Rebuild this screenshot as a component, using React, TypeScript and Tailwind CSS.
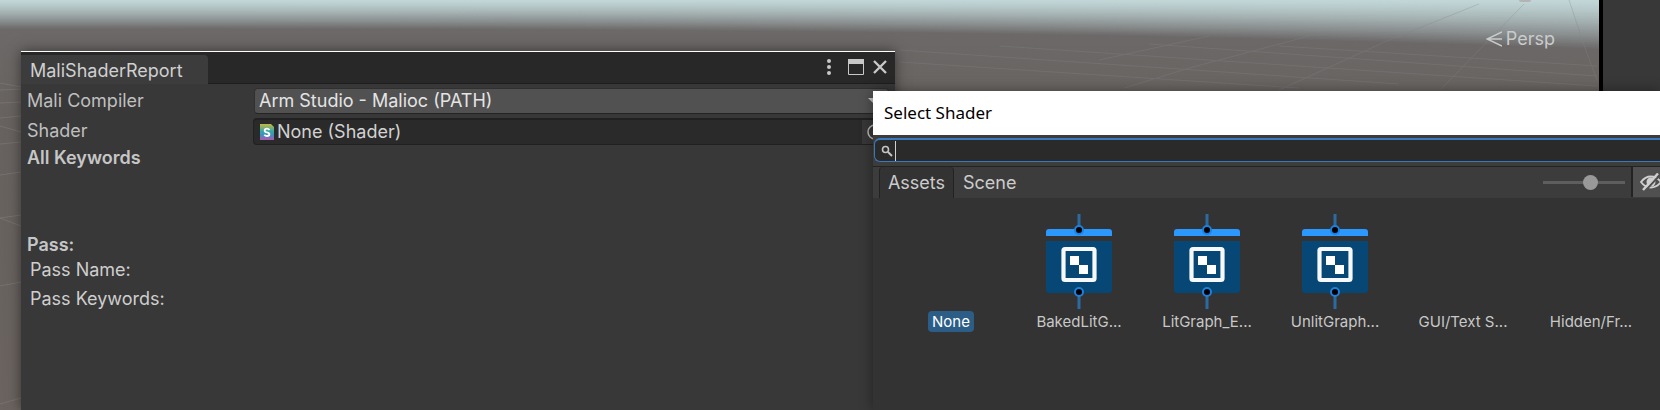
import React from "react";

const horizon = (x: number) => 29 + 20 * Math.pow(x / 1600, 3);

const mix = (a: number[], b: number[], t: number) =>
  `rgb(${a.map((v, i) => Math.round(v + (b[i] - v) * t)).join(",")})`;

const BANDS = 30;
const XS = Array.from({ length: 17 }, (_, i) => i * 100);

function Scene() {
  const bands = [];
  for (let i = BANDS; i >= 1; i--) {
    const t = i / BANDS;
    const pts = XS.map((x) => `${x},${(horizon(x) * t).toFixed(1)}`).join(" ");
    bands.push(
      <polygon key={i} points={`1600,0 0,0 ${pts}`} fill={mix([194, 215, 216], [110, 107, 107], Math.pow(t, 1.3))} />,
    );
  }
  return (
    <svg className="h-full w-full" viewBox="0 0 1600 410" preserveAspectRatio="none" aria-hidden="true">
      <defs>
        <linearGradient id="ground" x1="0" y1="0" x2="0" y2="1">
          <stop offset="0" stopColor="#6e6b6b" />
          <stop offset="0.3" stopColor="#67625f" />
          <stop offset="1" stopColor="#6a635f" />
        </linearGradient>
      </defs>
      <rect width="1600" height="410" fill="url(#ground)" />
      {bands}
      <g stroke="#8b8886" strokeWidth="1" opacity="0.4" fill="none">
        <path d="M0 83l21 4M0 90l21-1M0 103l21-1M0 118l21-2M0 126l21 6M0 144l21-2M0 175l21-3M0 218l21-3M0 218l21 8M0 286l21-4M0 404l21-6" />
      </g>
      <g stroke="#85878a" strokeWidth="1" opacity="0.3" fill="none">
        <path d="M1280 90L1390 40L1480 4M1442 89L1482 48L1525 4M1570 0L1586 48L1598 80M1125 88L1190 68L1310 36M1100 60L1210 36" />
        <path d="M900 62L1300 88M900 50L1400 84M1000 46L1598 86M1150 44L1598 76M1280 46L1598 66" />
      </g>
    </svg>
  );
}

function ShaderGraphIcon() {
  return (
    <svg className="h-24 w-17" viewBox="0 0 68 96" aria-hidden="true">
      <path d="M34 0v13M34 81v14" stroke="#2c6aa3" strokeWidth="3" />
      <path d="M1 22v-4q0-3 3-3h60q3 0 3 3v4z" fill="#2b98fd" />
      <path d="M1 27h66v49q0 3-3 3H4q-3 0-3-3z" fill="#064775" />
      <rect x="18.500" y="35" width="31" height="31" rx="1.500" fill="none" stroke="#f6f8fc" strokeWidth="4.200" />
      <path d="M25 42h9v9h9v9h-9v-9h-9z" fill="#fff" />
      <circle cx="34" cy="16" r="4" fill="#000" stroke="#1f7fdc" strokeWidth="2" />
      <circle cx="34" cy="78" r="4" fill="#000" stroke="#1f7fdc" strokeWidth="2" />
    </svg>
  );
}

const items = [
  { name: "None", selected: true },
  { name: "BakedLitG...", graph: true },
  { name: "LitGraph_E...", graph: true },
  { name: "UnlitGraph...", graph: true },
  { name: "GUI/Text S..." },
  { name: "Hidden/Fr..." },
];

function ReportWindow() {
  return (
    <section className="absolute top-[51px] bottom-0 left-[21px] flex w-[874px] flex-col border-t border-white bg-[#383838] shadow-[0_0_12px_rgba(0,0,0,0.5)]">
      <header className="flex h-8 items-end justify-between border-b border-[#1e1e1e] bg-[#282828]">
        <h1 className="-mb-px flex h-[29px] w-[187px] items-center rounded-tr bg-[#3c3c3c] pl-[9px] pt-0.5 text-[#d0d0d0]">
          MaliShaderReport
        </h1>
        <div className="flex h-full items-center gap-2 pr-[7px] pb-0.5 text-[#c8c8c8]">
          <button aria-label="Window menu">
            <svg className="h-4 w-4" viewBox="0 0 16 16" fill="currentColor">
              <circle cx="5" cy="2" r="2" />
              <circle cx="5" cy="8" r="2" />
              <circle cx="5" cy="14" r="2" />
            </svg>
          </button>
          <button aria-label="Maximize">
            <svg className="h-4 w-4" viewBox="0 0 16 16">
              <path d="M.5.5h15v15H.5z" fill="none" stroke="currentColor" />
              <path d="M0 0h16v5H0z" fill="currentColor" />
            </svg>
          </button>
          <button aria-label="Close">
            <svg className="h-4 w-4" viewBox="0 0 16 16" stroke="currentColor" strokeWidth="2.4">
              <path d="M2 2l12 12M14 2L2 14" />
            </svg>
          </button>
        </div>
      </header>
      <form className="flex flex-col pt-[3px] pl-1.5">
        <div className="flex h-7 items-center">
          <label htmlFor="compiler" className="w-[227px] text-[#bfbfbf]">Mali Compiler</label>
          <div className="mr-1.5 flex h-[26px] flex-1 items-center rounded border border-[#303030] border-b-[#242424] bg-[#515151] text-[#e4e4e4]">
            <select id="compiler" className="h-full flex-1 appearance-none bg-transparent pl-1 outline-none">
              <option>Arm Studio - Malioc (PATH)</option>
            </select>
            <svg className="mr-2 h-2 w-3" viewBox="0 0 12 8" aria-hidden="true">
              <path d="M0 1h12L6 7z" fill="#c4c4c4" />
            </svg>
          </div>
        </div>
        <div className="mt-0.5 flex h-7 items-center">
          <label htmlFor="shader" className="w-[226px] text-[#bfbfbf]">Shader</label>
          <div className="mr-1.5 flex h-[27px] flex-1 items-center rounded border border-t-2 border-[#212121] bg-[#2a2a2a] pl-1.5 text-[#d2d2d2]">
            <svg className="h-4 w-3.5" viewBox="0 0 14 16" aria-hidden="true">
              <defs>
                <linearGradient id="shaderFile" x1="0" y1="0" x2="0" y2="1">
                  <stop offset="0" stopColor="#c7b843" />
                  <stop offset="0.45" stopColor="#35a9a5" />
                  <stop offset="0.7" stopColor="#3f8fc0" />
                  <stop offset="1" stopColor="#b455a8" />
                </linearGradient>
              </defs>
              <path d="M0 0h11l3 3v13H0z" fill="url(#shaderFile)" />
              <path d="M9.5 6Q8.500 4.700 7 4.700q-2.300 0-2.300 1.700Q4.700 8 7 8.300q2.400.4 2.400 2 0 1.700-2.400 1.700-1.700 0-2.700-1.300" fill="none" stroke="#fff" strokeWidth="1.8" />
            </svg>
            <input id="shader" readOnly value="None (Shader)" className="min-w-0 flex-1 bg-transparent pl-[3px] outline-none" />
            <button type="button" aria-label="Pick shader" className="flex h-full w-[26px] items-center justify-center bg-[#373737]">
              <svg className="h-4 w-4" viewBox="0 0 16 16" fill="none" stroke="#b4b4b4" strokeWidth="1.5">
                <circle cx="8" cy="8" r="7" />
                <circle cx="8" cy="8" r="1.5" fill="#b4b4b4" />
              </svg>
            </button>
          </div>
        </div>
      </form>
      <h2 className="mt-px pl-1.5 font-semibold text-[#c6c6c6]">All Keywords</h2>
      <h2 className="mt-[63px] pl-1.5 font-semibold text-[#c6c6c6]">Pass:</h2>
      <p className="mt-px pl-[9px] text-[#cecece]">Pass Name:</p>
      <p className="mt-[5px] pl-[9px] text-[#cecece]">Pass Keywords:</p>
    </section>
  );
}

function SelectShaderWindow() {
  return (
    <section className="absolute top-[91px] right-0 bottom-0 left-[873px] flex flex-col overflow-hidden bg-[#333333] shadow-[0_0_12px_rgba(0,0,0,0.4)]">
      <h1 className="flex h-11 shrink-0 items-center bg-white pl-[11px] font-['Noto_Sans',sans-serif] text-[17px] text-black">
        Select Shader
      </h1>
      <div className="h-8 shrink-0 border-b border-[#232323] bg-[#3c3c3c] pt-[3px] pl-px">
        <label className="flex h-6 items-center rounded-l-md border border-t-2 border-r-0 border-[#3a79bb] bg-[#2a2a2a] pl-1.5">
          <svg className="h-3 w-3" viewBox="0 0 12 12" fill="none" stroke="#c4c4c4" aria-hidden="true">
            <circle cx="4.500" cy="4.500" r="3" strokeWidth="1.6" />
            <path d="M7 7l4 4" strokeWidth="2" />
          </svg>
          <span className="ml-0.5 h-5 w-px bg-[#d0d0d0]" />
          <input aria-label="Search shaders" className="min-w-0 flex-1 bg-transparent outline-none" />
        </label>
      </div>
      <nav className="flex h-[31px] shrink-0 items-center bg-[#3c3c3c] pl-1.5 text-[#cccccc]">
        <button className="h-full w-[75px] rounded-t border-x border-[#222222] bg-[#333333]">Assets</button>
        <button className="ml-[9px]">Scene</button>
        <div className="mr-1.5 ml-auto flex h-4 w-[82px] items-center">
          <input
            type="range"
            aria-label="Preview size"
            defaultValue={60}
            className="h-[3px] w-full appearance-none bg-[#5e5e5e] [&::-webkit-slider-thumb]:h-[15px] [&::-webkit-slider-thumb]:w-[15px] [&::-webkit-slider-thumb]:appearance-none [&::-webkit-slider-thumb]:rounded-full [&::-webkit-slider-thumb]:bg-[#999999]"
          />
        </div>
        <button aria-label="Hidden packages" className="mb-px h-[30px] w-[29px] overflow-hidden border-l-2 border-[#232323] bg-[#505050] pl-[7px]">
          <svg className="h-[18px] w-[22px]" viewBox="0 0 22 18" fill="none" stroke="#d0d0d0" strokeWidth="1.8">
            <path d="M1 9q4-5.500 10-5.500T21 9q-4 5.500-10 5.500T1 9z" />
            <circle cx="11" cy="9" r="4.500" fill="#d0d0d0" stroke="none" />
            <path d="M5 18L20 2" stroke="#505050" strokeWidth="2" />
            <path d="M3 17L18 .5" strokeWidth="2.4" />
          </svg>
        </button>
      </nav>
      <ul className="flex pt-4 pl-3.5 text-[15px] leading-5">
        {items.map((item) => (
          <li key={item.name} className="flex w-32 shrink-0 flex-col items-center text-[#c8c8c8]">
            <div className="flex h-[97px]">{item.graph && <ShaderGraphIcon />}</div>
            <button className={item.selected ? "rounded bg-[#2c5d87] px-1 pt-px text-white" : "px-1 pt-px"}>{item.name}</button>
          </li>
        ))}
      </ul>
    </section>
  );
}

export default function App() {
  return (
    <main className="relative flex h-screen overflow-hidden bg-[#383838] font-[Inter,sans-serif] text-[18px] leading-6">
      <div className="relative min-w-0 flex-1 overflow-hidden">
        <Scene />
        <div className="absolute top-0 right-[68px] h-0.5 w-3 rounded-b bg-[#b4b4b4]" />
        <div className="absolute top-[27px] right-[44px] flex items-center gap-1 text-[#c9cccc]">
          <svg className="h-4 w-4" viewBox="0 0 16 16" fill="none" stroke="currentColor" aria-hidden="true">
            <path d="M16 1L1 8l15 7M1 8h15" strokeWidth="1.5" />
          </svg>
          <span>Persp</span>
        </div>
      </div>
      <aside className="w-[61px] shrink-0 border-l-4 border-black bg-[#383838]" />
      <ReportWindow />
      <SelectShaderWindow />
    </main>
  );
}
